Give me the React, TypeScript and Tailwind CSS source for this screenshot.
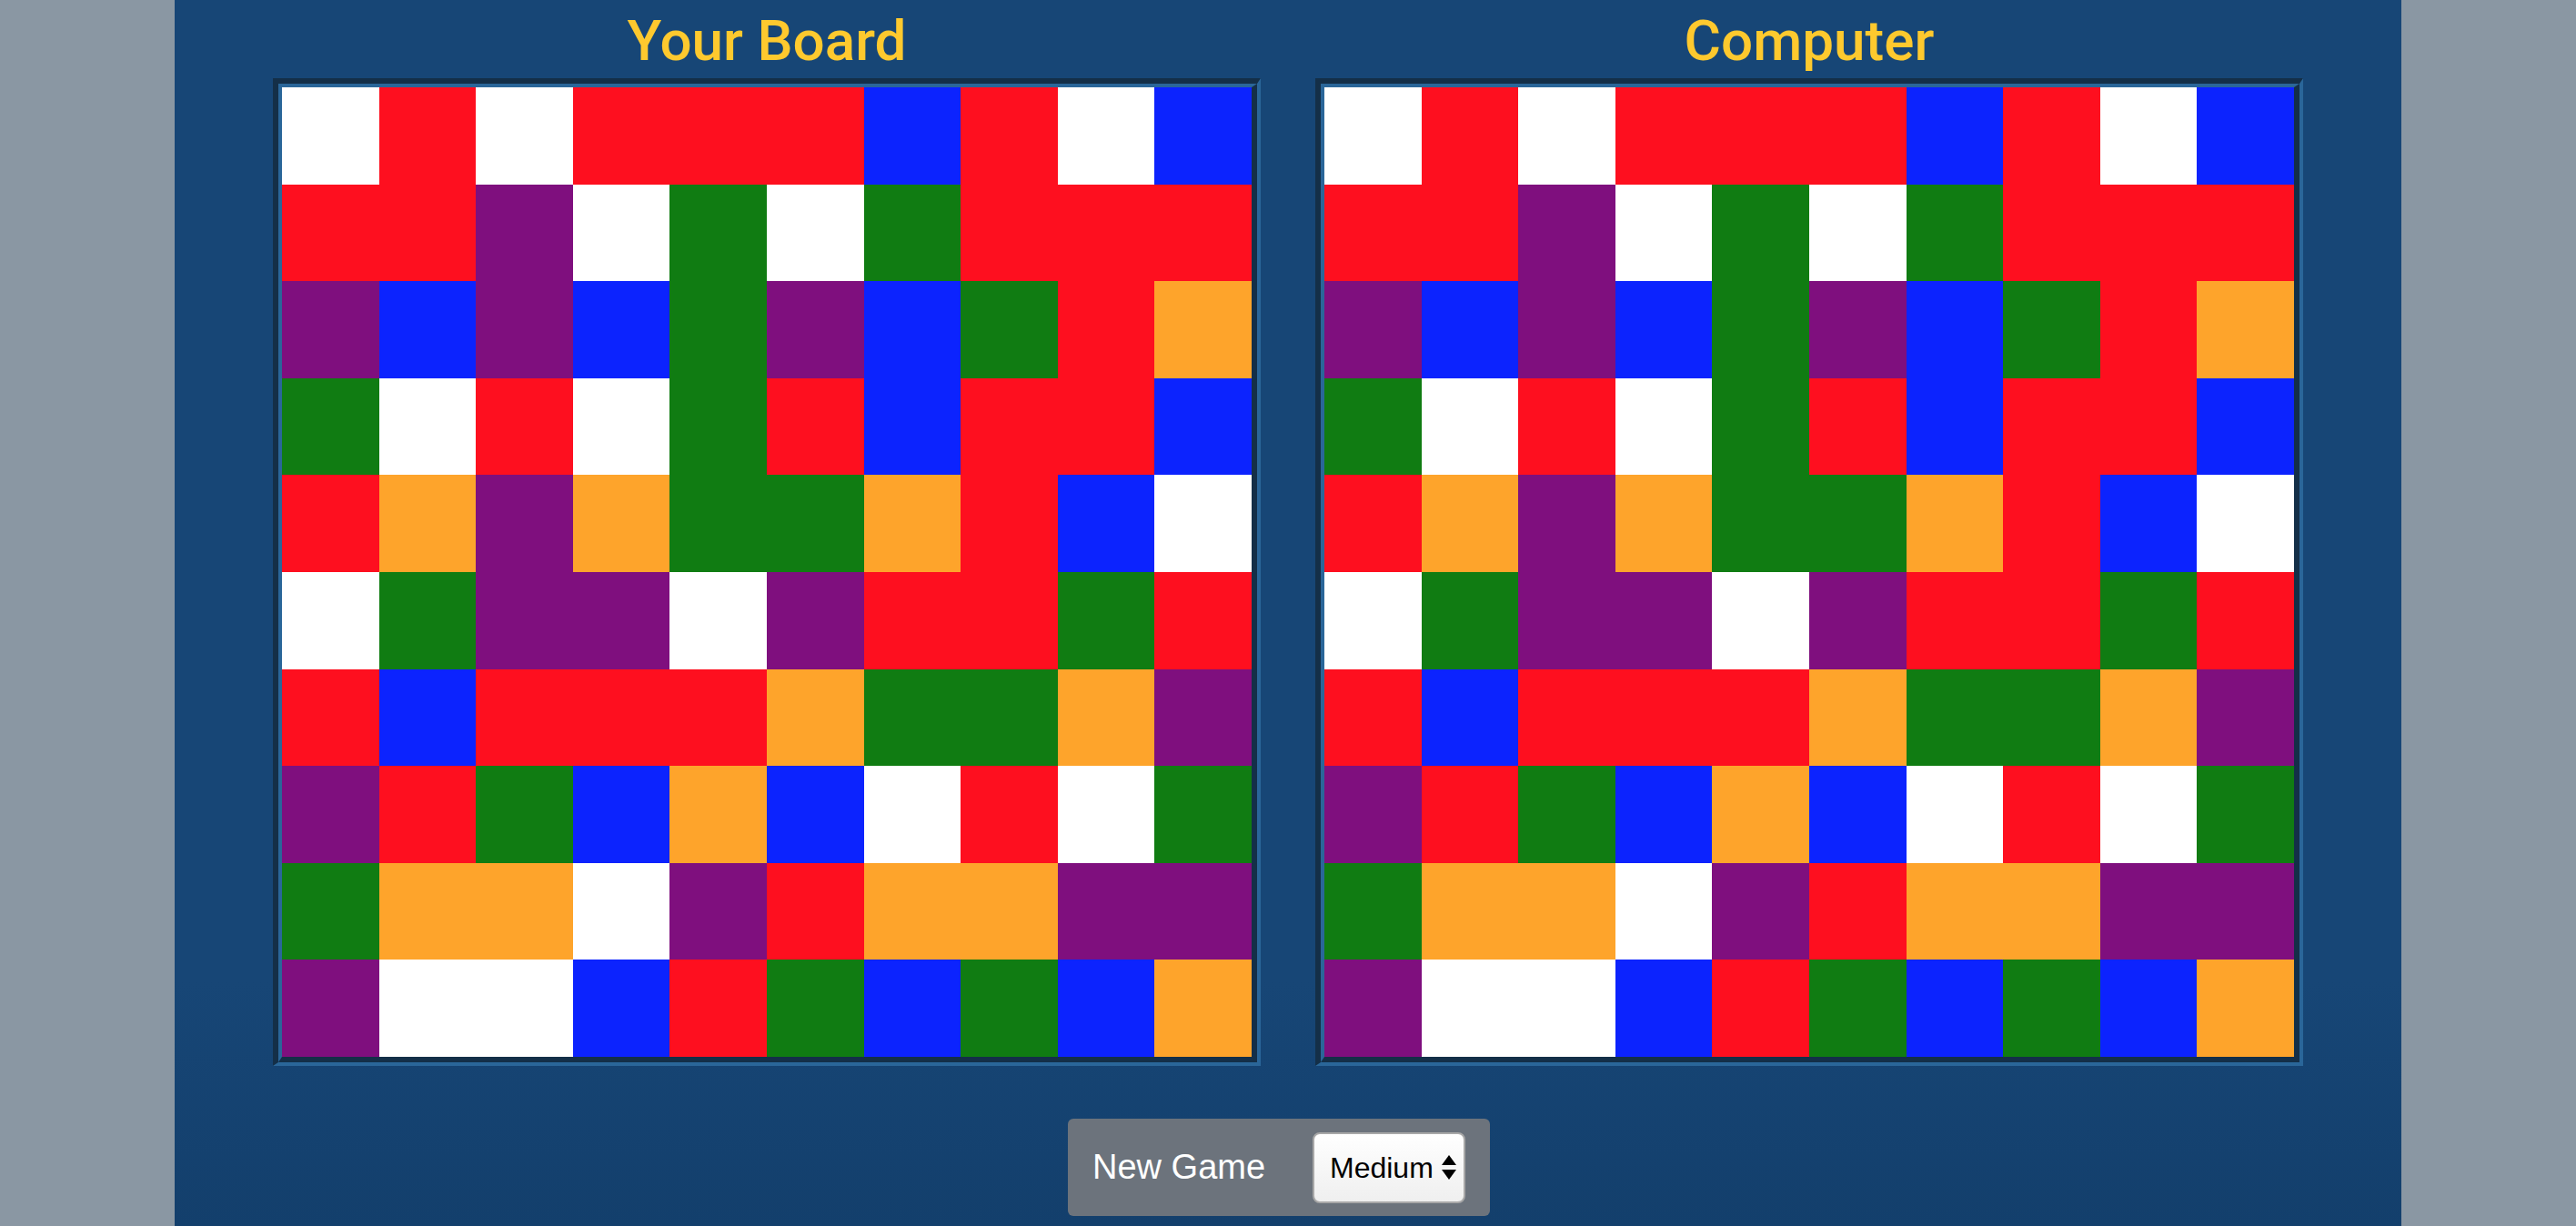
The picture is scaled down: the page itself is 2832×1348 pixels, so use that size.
const W = "bg-white";
const R = "bg-[#fe0f1f]";
const B = "bg-[#0c23fe]";
const G = "bg-[#107c12]";
const P = "bg-[#7f0f7e]";
const O = "bg-[#fea42b]";

const board: string[][] = [
  [W, R, W, R, R, R, B, R, W, B],
  [R, R, P, W, G, W, G, R, R, R],
  [P, B, P, B, G, P, B, G, R, O],
  [G, W, R, W, G, R, B, R, R, B],
  [R, O, P, O, G, G, O, R, B, W],
  [W, G, P, P, W, P, R, R, G, R],
  [R, B, R, R, R, O, G, G, O, P],
  [P, R, G, B, O, B, W, R, W, G],
  [G, O, O, W, P, R, O, O, P, P],
  [P, W, W, B, R, G, B, G, B, O],
];

function Board({ title }: { title: string }) {
  return (
    <div className="w-[1086px]">
      <h2 className="h-[86px] pt-[4px] flex items-center justify-center text-[62px] leading-none font-medium text-[#fec92e] font-['Roboto',sans-serif]">
        {title}
      </h2>
      <div className="border-t-[6px] border-l-[6px] border-r-[4px] border-b-[4px] border-t-[#142f48] border-l-[#142f48] border-r-[#2a6699] border-b-[#2a6699]">
        <div className="border-t-[4px] border-l-[4px] border-r-[6px] border-b-[6px] border-t-[#2a6699] border-l-[#2a6699] border-r-[#142f48] border-b-[#142f48]">
          <div className="grid grid-cols-10 grid-rows-10 w-[1066px] h-[1066px]">
            {board.flat().map((c, i) => (
              <div key={i} className={c} />
            ))}
          </div>
        </div>
      </div>
    </div>
  );
}

export default function App() {
  return (
    <div className="h-screen overflow-hidden bg-[#8a97a3] font-['Liberation_Sans',Arial,sans-serif]">
      <div className="mx-auto w-[2448px] h-full px-[108px] bg-[linear-gradient(to_bottom,#174676_0%,#174676_80%,#133f6c_100%)]">
        <div className="flex gap-[60px]">
          <Board title="Your Board" />
          <Board title="Computer" />
        </div>

        <div className="flex justify-center mt-[58px] pr-[20px]">
          <div className="w-[464px] h-[107px] px-[27px] rounded-[6px] bg-[#6c737c] flex items-center justify-between">
            <span className="text-[38px] text-white">New Game</span>
            <div className="w-[168px] h-[78px] rounded-[8px] border-2 border-[#a8a8a8] bg-[linear-gradient(to_bottom,#ffffff,#efefef)] flex items-center pl-[17px] pr-[8px] justify-between">
              <span className="text-[32px] text-black">Medium</span>
              <svg width="16" height="27" viewBox="0 0 16 27">
                <path d="M8 0 L16 11 L0 11 Z" fill="#000" />
                <path d="M0 16 L16 16 L8 27 Z" fill="#000" />
              </svg>
            </div>
          </div>
        </div>
      </div>
    </div>
  );
}
